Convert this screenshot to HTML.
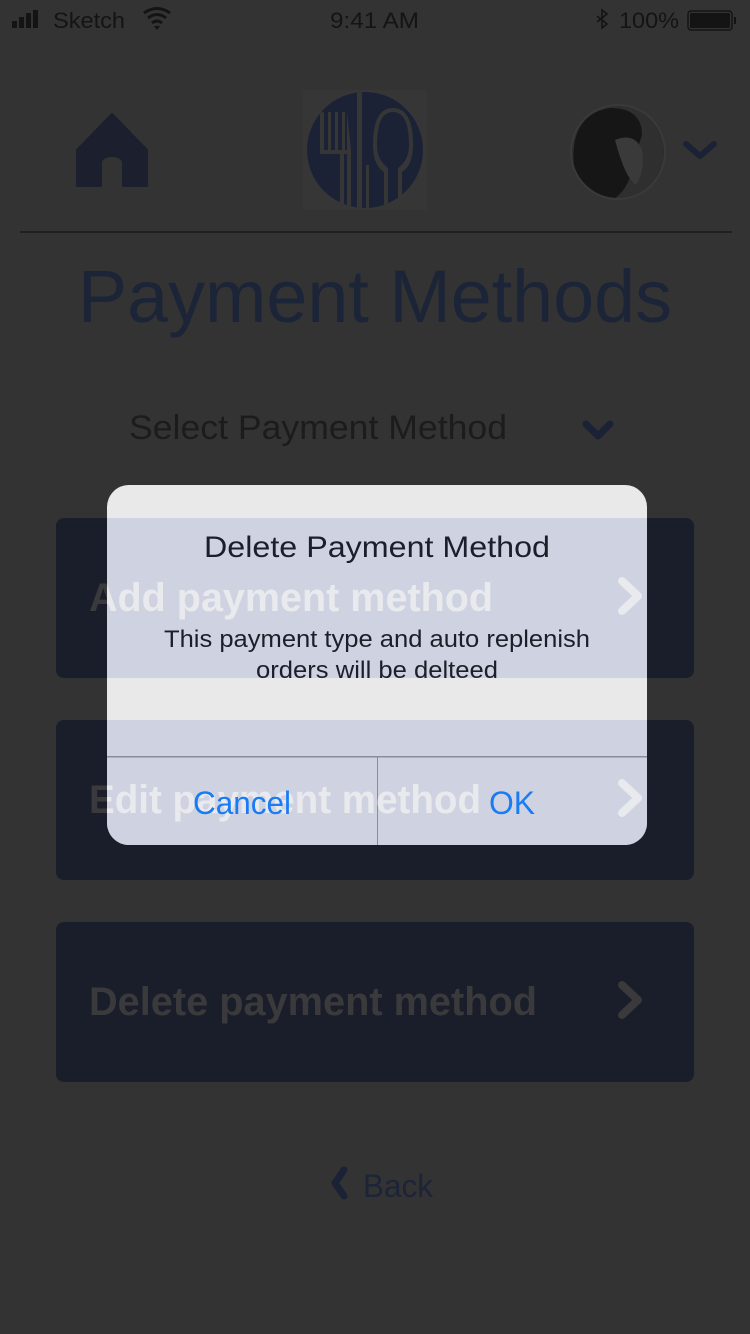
<!DOCTYPE html>
<html><head><meta charset="utf-8"><style>
html,body{margin:0;padding:0;background:#333;}
svg{display:block}
text{font-family:"Liberation Sans",sans-serif}
</style></head><body>
<svg width="750" height="1334" viewBox="0 0 750 1334" xmlns="http://www.w3.org/2000/svg">
<rect width="750" height="1334" fill="#333"/>
<!-- status bar -->
<rect x="12" y="21" width="5" height="7" fill="#141414"/>
<rect x="19" y="17" width="5" height="11" fill="#141414"/>
<rect x="26" y="13" width="5" height="15" fill="#141414"/>
<rect x="33" y="10" width="5" height="18" fill="#141414"/>
<text x="53" y="28" font-size="22" fill="#141414" textLength="72" lengthAdjust="spacingAndGlyphs">Sketch</text>
<path d="M144 13 Q157 4 170 13 M148 18 Q157 11 166 18 M152 23 Q157 19 162 23" stroke="#141414" stroke-width="3" fill="none"/>
<path d="M154 26 L157 30 L160 26Z" fill="#141414"/>
<text x="330" y="28" font-size="22" fill="#141414" textLength="89" lengthAdjust="spacingAndGlyphs">9:41 AM</text>
<path d="M597 16 L607 24 L602 28 V10 L607 14 L597 22" stroke="#141414" stroke-width="1.6" fill="none"/>
<text x="619" y="28" font-size="22" fill="#141414" textLength="60" lengthAdjust="spacingAndGlyphs">100%</text>
<rect x="688" y="11" width="44" height="19" rx="3" fill="none" stroke="#141414" stroke-width="1.5"/>
<rect x="690" y="13" width="40" height="15" rx="1.5" fill="#141414"/>
<rect x="734" y="17" width="2" height="7" fill="#141414"/>
<!-- header -->
<path d="M112 114 L147 150 V186 H123 V164 Q123 156 112 156 Q101 156 101 164 V186 H77 V150 Z" fill="#1b1f2e" stroke="#1b1f2e" stroke-width="2" stroke-linejoin="round"/>
<rect x="303" y="90" width="124" height="120" fill="#363636"/>
<clipPath id="lc"><ellipse cx="365" cy="150" rx="58" ry="58"/></clipPath>
<g clip-path="url(#lc)">
<rect x="300" y="90" width="130" height="120" fill="#1b2236"/>
<g fill="#363636">
<rect x="357" y="90" width="5" height="120"/>
<rect x="320" y="112" width="4" height="40" rx="2"/>
<rect x="328" y="112" width="3" height="40"/>
<rect x="335" y="112" width="3" height="40"/>
<rect x="342" y="112" width="3" height="40"/>
<rect x="320" y="150" width="27" height="4"/>
<rect x="340" y="150" width="4" height="60"/>
<path d="M347 112 V210 H351 V150 Z"/>
<path d="M393 108 Q373 108 373 145 Q373 165 384 172 V210 H388 V168 Q377 160 377 145 Q377 112 393 112 Q409 112 409 145 Q409 160 398 168 V210 H402 V172 Q413 165 413 145 Q413 108 393 108Z"/>
<rect x="366" y="165" width="3" height="45"/>
</g>
</g>
<circle cx="618" cy="152" r="47" fill="#2e2e2e" stroke="#3a3a3a" stroke-width="2"/>
<clipPath id="ac"><circle cx="618" cy="152" r="46"/></clipPath>
<g clip-path="url(#ac)">
<rect x="570" y="105" width="96" height="96" fill="#2f2f2f"/>
<path d="M575 175 Q566 115 610 108 Q642 108 642 135 L634 160 Q630 190 612 200 L580 200Z" fill="#161616"/>
<path d="M615 140 Q635 132 642 150 Q645 172 636 185 Q625 178 615 140Z" fill="#3a3a3a"/>
</g>
<path d="M686 144 L700 156 L714 144" stroke="#1b2236" stroke-width="6" fill="none" stroke-linecap="round" stroke-linejoin="round"/>
<rect x="20" y="231" width="712" height="2" fill="#1f1f1f"/>
<text x="375" y="322" font-size="74" fill="#1c2438" text-anchor="middle" textLength="594" lengthAdjust="spacingAndGlyphs">Payment Methods</text>
<text x="129" y="439" font-size="34" fill="#1c1c1c" textLength="378" lengthAdjust="spacingAndGlyphs">Select Payment Method</text>
<path d="M586 424 L598 436 L610 424" stroke="#1b2236" stroke-width="7" fill="none" stroke-linecap="round" stroke-linejoin="round"/>
<!-- buttons -->
<rect x="56" y="518" width="638" height="160" rx="8" fill="#1a1e2a"/>
<rect x="56" y="720" width="638" height="160" rx="8" fill="#1a1e2a"/>
<rect x="56" y="922" width="638" height="160" rx="8" fill="#1a1e2a"/>
<text x="89" y="1015" font-size="40" font-weight="bold" fill="#3a3a3c" textLength="448" lengthAdjust="spacingAndGlyphs">Delete payment method</text>
<path d="M622 985 L638 1000 L622 1015" stroke="#3a3a3c" stroke-width="8" fill="none" stroke-linecap="round" stroke-linejoin="round"/>
<path d="M344 1170 L335 1183 L344 1196" stroke="#1b2236" stroke-width="7" fill="none" stroke-linecap="round" stroke-linejoin="round"/>
<text x="363" y="1197" font-size="32" fill="#1c2438" textLength="70" lengthAdjust="spacingAndGlyphs">Back</text>
<!-- dialog -->
<clipPath id="dc"><rect x="107" y="485" width="540" height="360" rx="22"/></clipPath>
<g clip-path="url(#dc)">
<rect x="107" y="485" width="540" height="360" fill="#e9e9e9"/>
<rect x="107" y="518" width="540" height="160" fill="#cfd3e1"/>
<rect x="107" y="720" width="540" height="125" fill="#cfd3e1"/>
<rect x="107" y="756" width="540" height="1.5" fill="#8a8e9a"/>
<rect x="377" y="757" width="1" height="88" fill="#8a8e9a"/>
<text x="89" y="611" font-size="40" font-weight="bold" fill="#e9eaee" textLength="404" lengthAdjust="spacingAndGlyphs">Add payment method</text>
<path d="M622 581 L638 596 L622 611" stroke="#e9eaee" stroke-width="8" fill="none" stroke-linecap="round" stroke-linejoin="round"/>
<text x="89" y="813" font-size="40" font-weight="bold" fill="#e9eaee" textLength="392" lengthAdjust="spacingAndGlyphs">Edit payment method</text>
<path d="M622 783 L638 798 L622 813" stroke="#e9eaee" stroke-width="8" fill="none" stroke-linecap="round" stroke-linejoin="round"/>
</g>
<clipPath id="oc"><rect x="0" y="480" width="107" height="400"/></clipPath>
<g clip-path="url(#oc)">
<text x="89" y="611" font-size="40" font-weight="bold" fill="#3a3a3c" textLength="404" lengthAdjust="spacingAndGlyphs">Add payment method</text>
<text x="89" y="813" font-size="40" font-weight="bold" fill="#3a3a3c" textLength="392" lengthAdjust="spacingAndGlyphs">Edit payment method</text>
</g>
<text x="377" y="557" font-size="30" fill="#1c1f2a" text-anchor="middle" textLength="346" lengthAdjust="spacingAndGlyphs">Delete Payment Method</text>
<text x="377" y="647" font-size="24" fill="#1c1f2a" text-anchor="middle" textLength="426" lengthAdjust="spacingAndGlyphs">This payment type and auto replenish</text>
<text x="377" y="678" font-size="24" fill="#1c1f2a" text-anchor="middle" textLength="242" lengthAdjust="spacingAndGlyphs">orders will be delteed</text>
<text x="242" y="814" font-size="32" fill="#1a7cf5" text-anchor="middle" textLength="98" lengthAdjust="spacingAndGlyphs">Cancel</text>
<text x="512" y="814" font-size="32" fill="#1a7cf5" text-anchor="middle" textLength="46" lengthAdjust="spacingAndGlyphs">OK</text>
</svg>
</body></html>
